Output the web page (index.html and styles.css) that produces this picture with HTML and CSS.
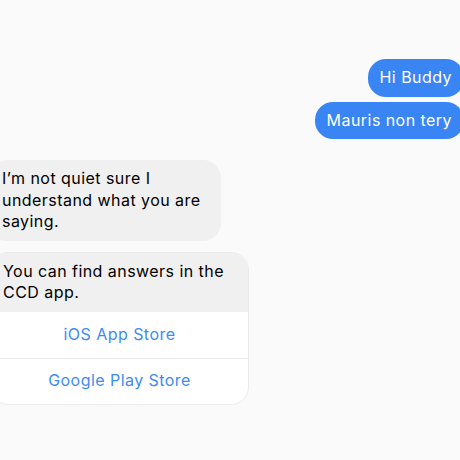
FILE: index.html
```html
<!DOCTYPE html>
<html lang="en">
<head>
<meta charset="utf-8">
<link rel="stylesheet" href="styles.css">
</head>
<body>
<div class="thread">
  <div class="row out first"><div class="bubble blue">Hi Buddy</div></div>
  <div class="row out"><div class="bubble blue">Mauris non tery</div></div>
  <div class="row in gap-lg"><div class="bubble gray w1">I’m not quiet sure I understand what you are saying.</div></div>
  <div class="row in gap-md">
    <div class="card">
      <div class="card-text">You can find answers in the CCD app.</div>
      <div class="card-btn">iOS App Store</div>
      <div class="card-btn">Google Play Store</div>
    </div>
  </div>
</div>
</body>
</html>
```

FILE: styles.css
```css
html, body {
  margin: 0;
  padding: 0;
  background: #fafafa;
  overflow: hidden;
  height: 460px;
}
.thread {
  display: flex;
  flex-direction: column;
  padding-top: 59px;
  margin: 0 -4px 0 -10px;
  font-family: Inter, "Liberation Sans", sans-serif;
  font-size: 16px;
  letter-spacing: 0.45px;
  line-height: 21.5px;
  -webkit-font-smoothing: antialiased;
}
.row { display: flex; }
.row.out { justify-content: flex-end; margin-top: 5px; }
.row.out.first { margin-top: 0; }
.row.in { justify-content: flex-start; }
.gap-lg { margin-top: 21px; }
.gap-md { margin-top: 11px; }
.bubble {
  padding: 8px 12px;
  border-radius: 18px;
}
.blue {
  background: #3a85f4;
  color: #fff;
}
.gray {
  background: #f0f0f0;
  color: #000;
}
.w1 { width: 207px; }
.card {
  width: 257px;
  border: 1px solid #ebebeb;
  border-radius: 18px;
  overflow: hidden;
  background: #fff;
}
.card-text {
  background: #f0f0f0;
  color: #000;
  padding: 8px 12px 8px 12px;
}
.card-btn {
  height: 45px;
  display: flex;
  align-items: center;
  justify-content: center;
  color: #3d8cf1;
  border-top: 1px solid #ebebeb;
}
.card-text + .card-btn { border-top: none; height: 46px; }
```
